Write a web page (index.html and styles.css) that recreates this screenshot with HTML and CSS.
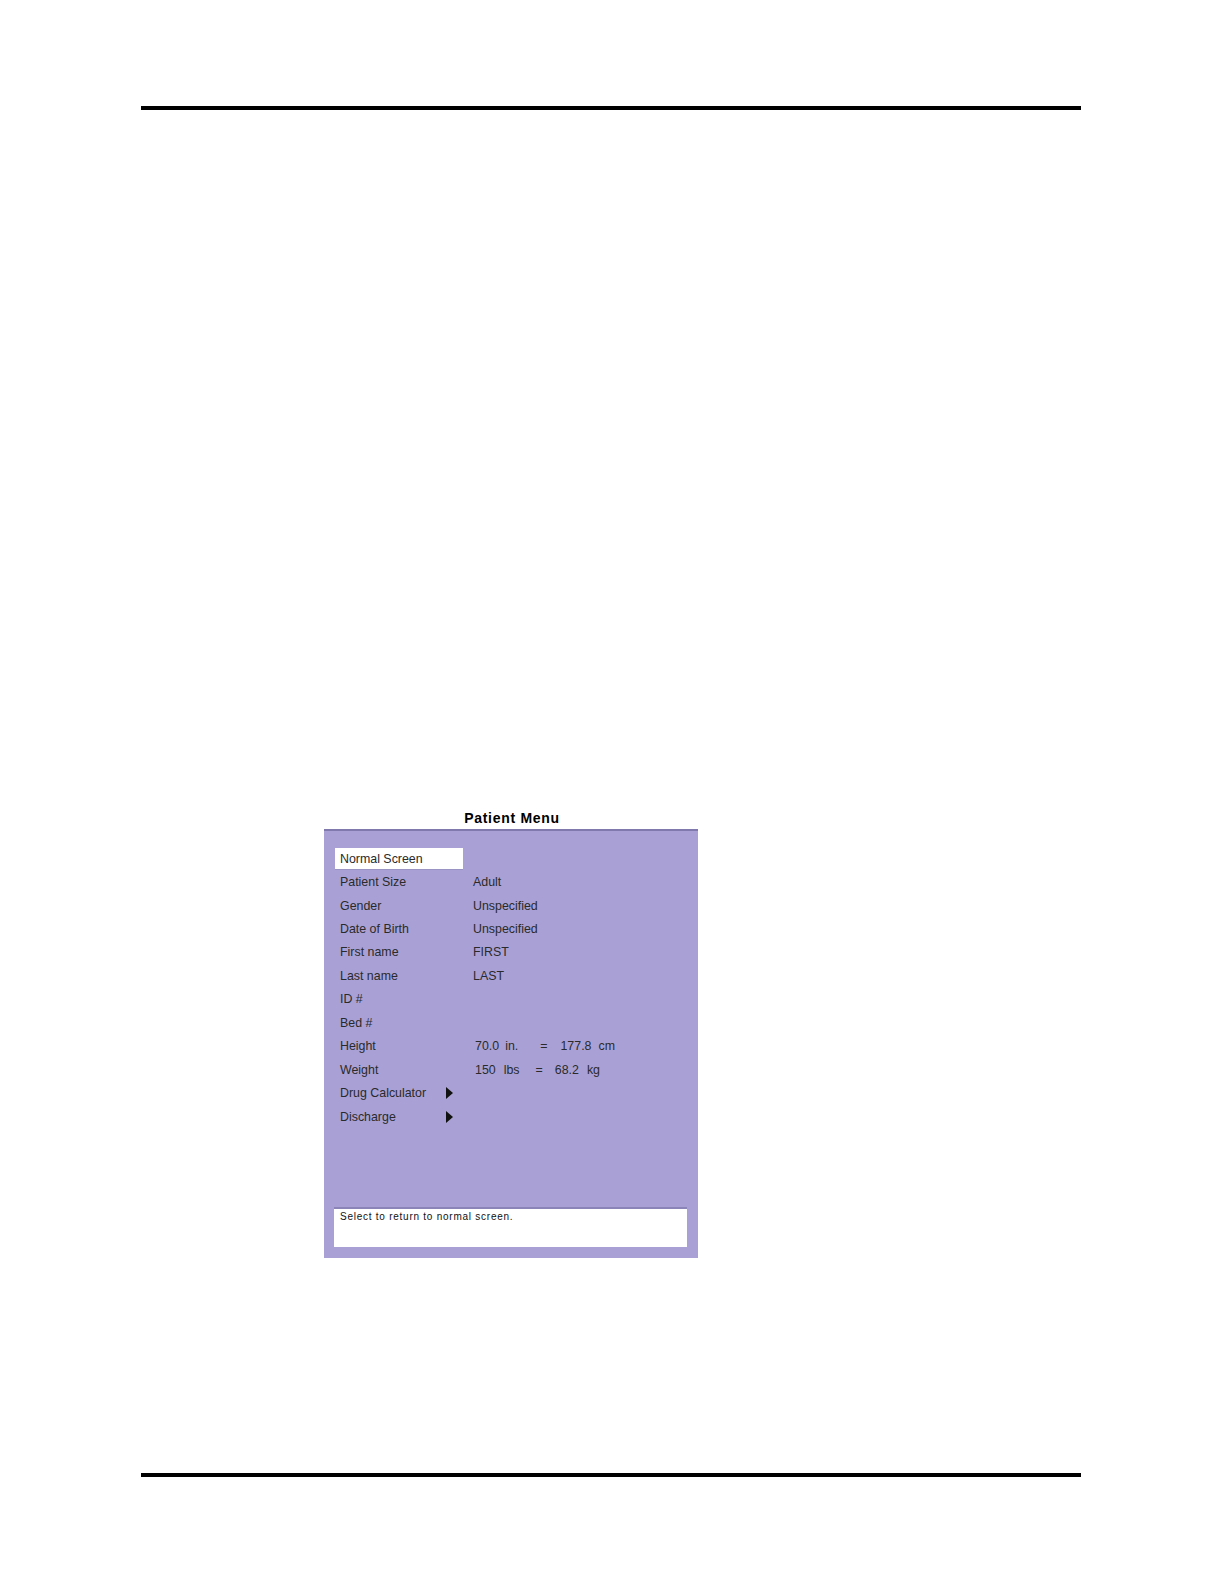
FILE: index.html
```html
<!DOCTYPE html>
<html>
<head>
<meta charset="utf-8">
<link rel="stylesheet" href="styles.css">
</head>
<body>
<div class="page">
  <div class="rule"></div>
  <div class="content">
    <div class="figure">
      <div class="fig-title">Patient Menu</div>
      <div class="panel">
        <div class="rows">
          <div class="row"><div class="label"><span class="selected">Normal Screen</span></div><div class="value"></div></div>
          <div class="row"><div class="label">Patient Size</div><div class="value">Adult</div></div>
          <div class="row"><div class="label">Gender</div><div class="value">Unspecified</div></div>
          <div class="row"><div class="label">Date of Birth</div><div class="value">Unspecified</div></div>
          <div class="row"><div class="label">First name</div><div class="value">FIRST</div></div>
          <div class="row"><div class="label">Last name</div><div class="value">LAST</div></div>
          <div class="row"><div class="label">ID #</div><div class="value"></div></div>
          <div class="row"><div class="label">Bed #</div><div class="value"></div></div>
          <div class="row"><div class="label">Height</div><div class="value num"><span>70.0</span><span class="h1">in.</span><span class="h2">=</span><span class="h3">177.8</span><span class="h4">cm</span></div></div>
          <div class="row"><div class="label">Weight</div><div class="value num"><span>150</span><span class="w1">lbs</span><span class="w2">=</span><span class="w3">68.2</span><span class="w4">kg</span></div></div>
          <div class="row"><div class="label sub">Drug Calculator<span class="arrow"></span></div><div class="value"></div></div>
          <div class="row"><div class="label sub">Discharge<span class="arrow"></span></div><div class="value"></div></div>
        </div>
        <div class="help">Select to return to normal screen.</div>
      </div>
    </div>
  </div>
  <div class="rule"></div>
</div>
</body>
</html>
```

FILE: styles.css
```css
html, body {
  margin: 0;
  padding: 0;
  background: #ffffff;
}
.page {
  width: 1224px;
  height: 1584px;
  padding-top: 106px;
  box-sizing: border-box;
  font-family: "Liberation Sans", Arial, sans-serif;
}
.rule {
  margin-left: 141px;
  width: 940px;
  height: 4px;
  background: #000;
}
.content {
  height: 1363px;
  display: flex;
  flex-direction: column;
  justify-content: flex-end;
}
.figure {
  margin-left: 324px;
  width: 374px;
  margin-bottom: 215px;
  display: flex;
  flex-direction: column;
}
.fig-title {
  text-align: center;
  font-weight: bold;
  font-size: 14px;
  letter-spacing: 0.7px;
  color: #000;
  height: 17px;
  line-height: 17px;
  margin-bottom: 2px;
  padding-left: 2px;
}
.panel {
  height: 429px;
  box-sizing: border-box;
  background: #a9a1d6;
  border-top: 2px solid #7f79ae;
  padding: 16px 11px 11px 10px;
  display: flex;
  flex-direction: column;
}
.rows {
  display: flex;
  flex-direction: column;
  padding-left: 1px;
}
.row {
  display: flex;
  height: 23.45px;
  align-items: center;
  font-size: 12.4px;
  color: #2a2a2a;
}
.label {
  width: 138px;
  box-sizing: border-box;
  padding-left: 5px;
  white-space: nowrap;
}
.label.sub {
  display: flex;
  align-items: center;
  justify-content: space-between;
  padding-right: 20px;
}
.selected {
  display: block;
  margin-left: -5px;
  width: 128px;
  height: 22px;
  line-height: 22px;
  box-sizing: border-box;
  padding-left: 5px;
  background: #ffffff;
  border-bottom: 1px solid #9a94c4;
}
.value {
  white-space: nowrap;
}
.num {
  padding-left: 2px;
}
.h1 { margin-left: 6px; }
.h2 { margin-left: 22px; }
.h3 { margin-left: 13px; }
.h4 { margin-left: 7px; }
.w1 { margin-left: 8px; }
.w2 { margin-left: 16px; }
.w3 { margin-left: 12px; }
.w4 { margin-left: 8px; }
.arrow {
  width: 0;
  height: 0;
  border-top: 6.5px solid transparent;
  border-bottom: 6.5px solid transparent;
  border-left: 7px solid #111;
}
.help {
  margin-top: auto;
  height: 40px;
  box-sizing: border-box;
  background: #ffffff;
  border-top: 2px solid #8a84b9;
  padding: 2px 5px 0 6px;
  font-size: 10px;
  letter-spacing: 0.75px;
  color: #111;
}
```
